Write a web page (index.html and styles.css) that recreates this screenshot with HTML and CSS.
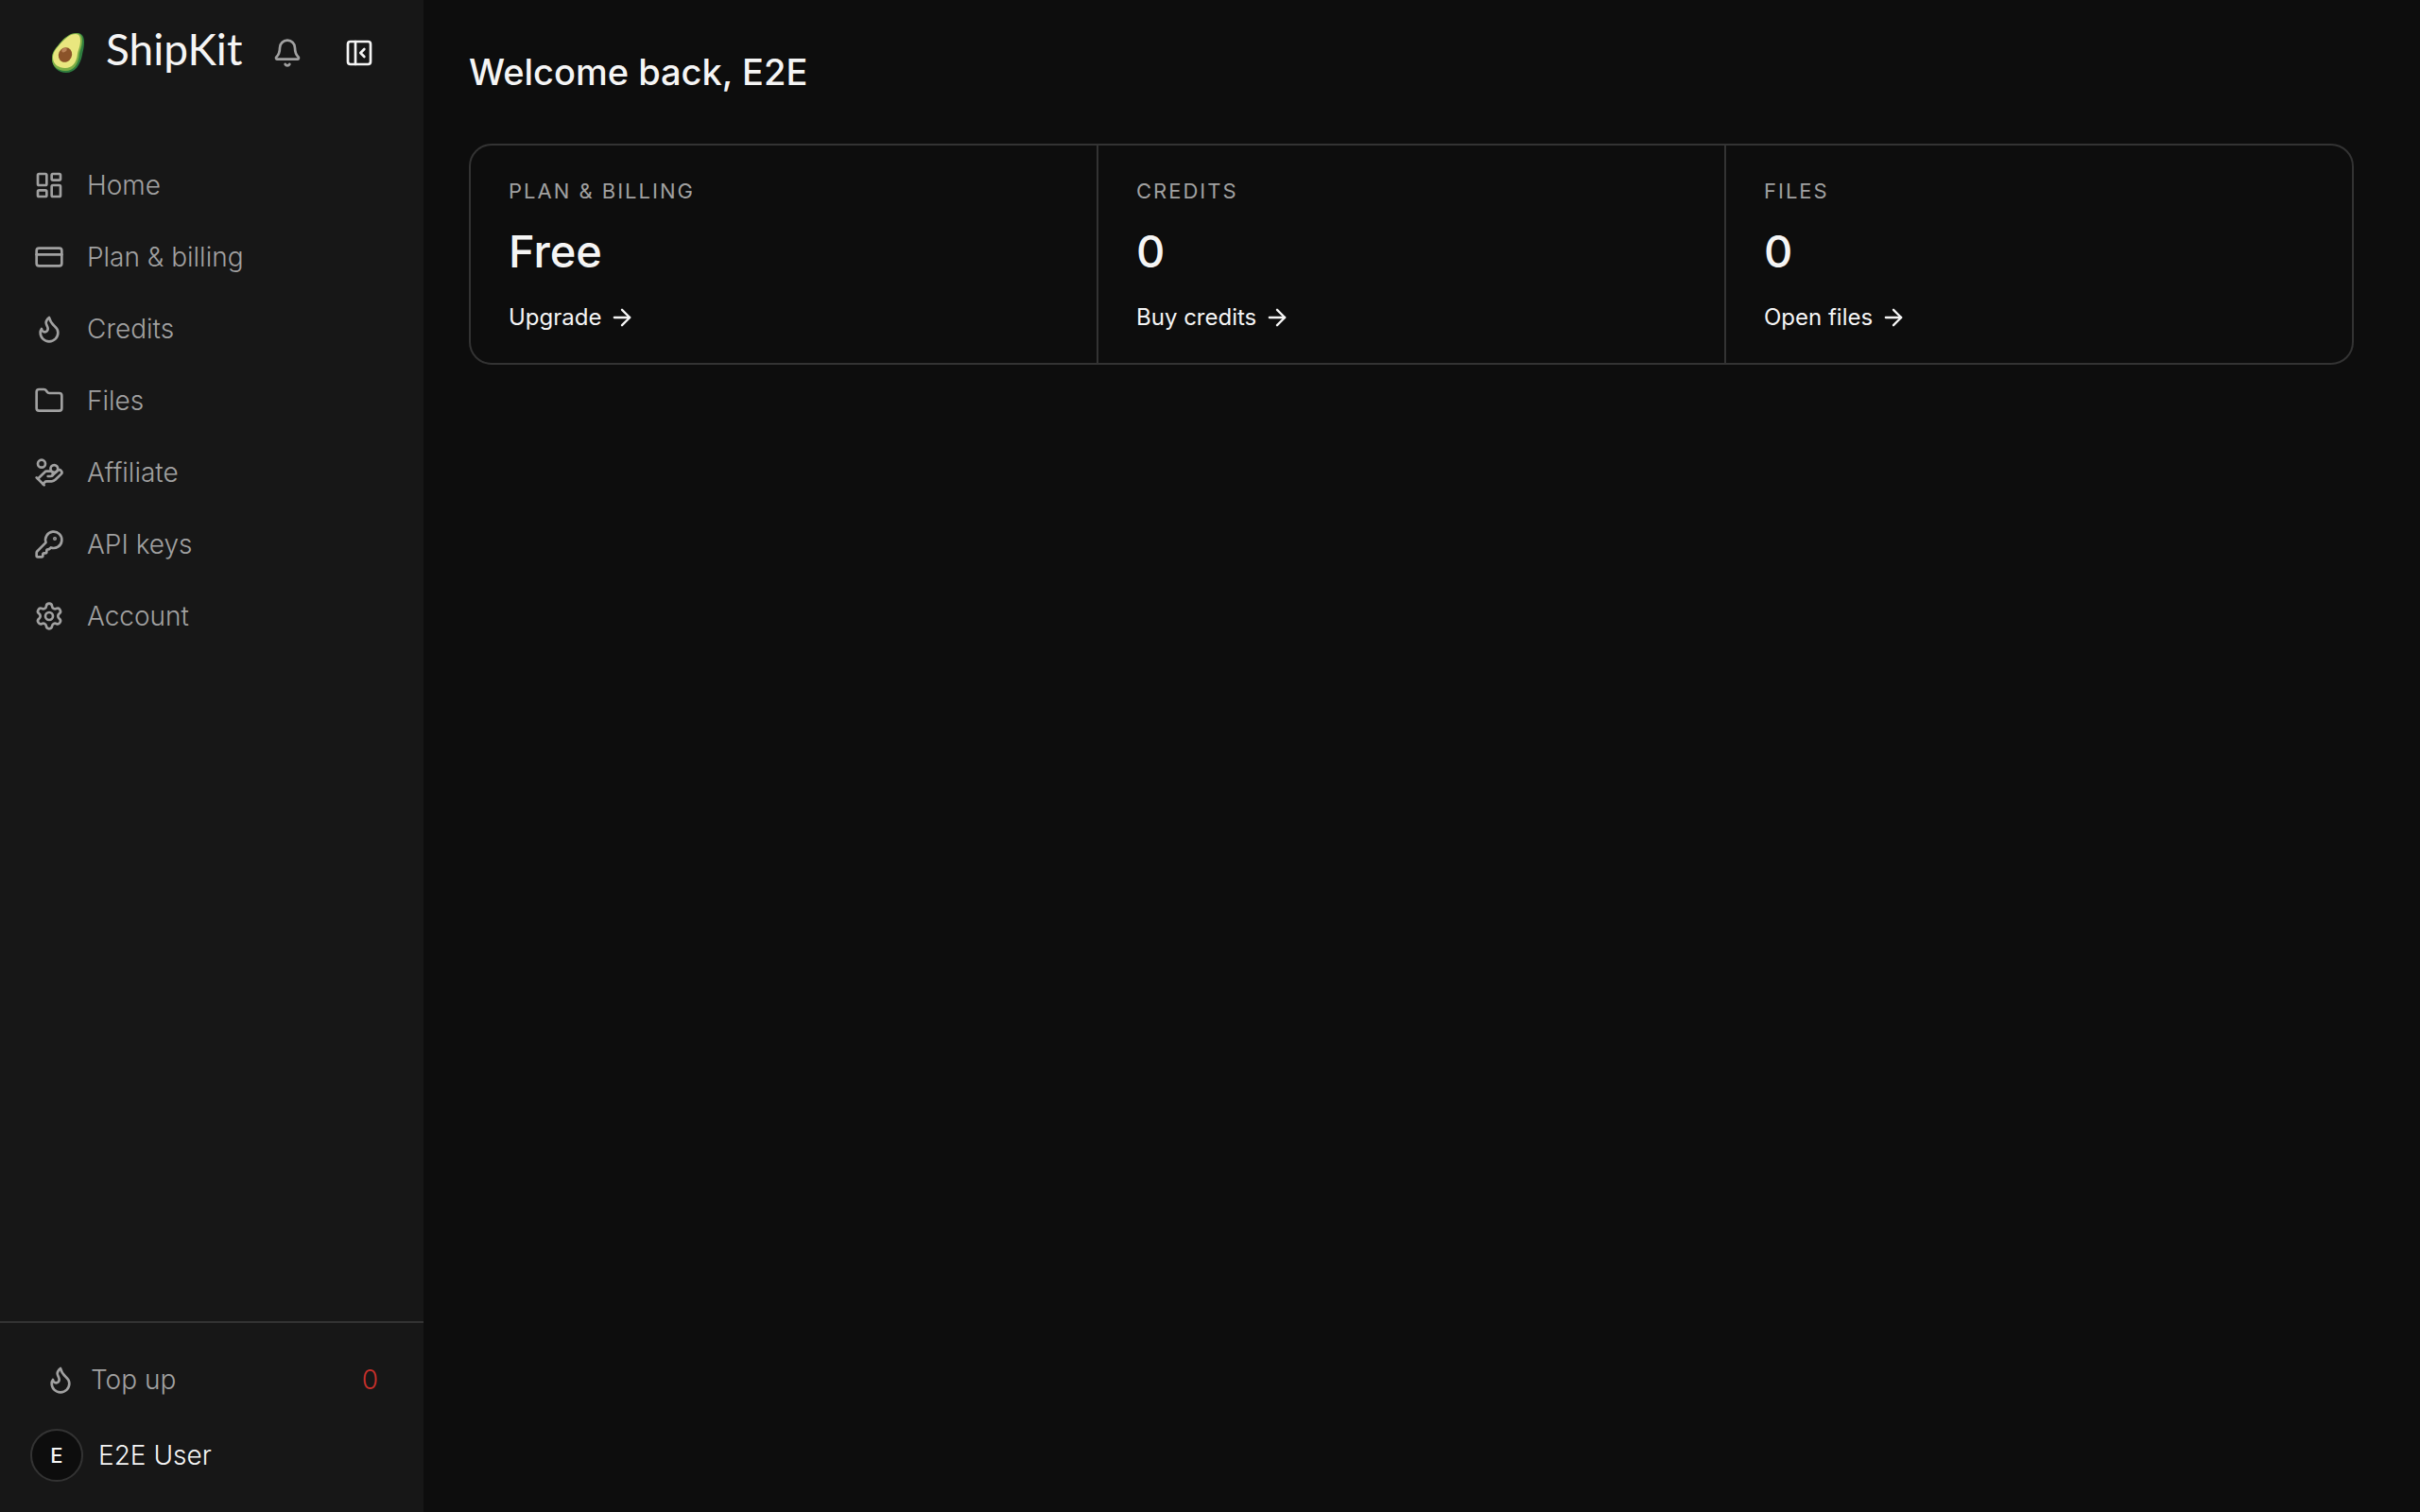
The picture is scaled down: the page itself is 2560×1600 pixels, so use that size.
FILE: index.html
```html
<!DOCTYPE html>
<html lang="en">
  <head>
    <meta charset="UTF-8" />
    <meta name="viewport" content="width=device-width, initial-scale=1.0" />
    <title>ShipKit - Dashboard</title>
    <link rel="stylesheet" href="styles.css" />
  </head>
  <body>
    <aside class="sidebar">
      <div class="sidebar-header">
        <a class="brand" href="#">
          <svg class="brand-logo" viewBox="0 0 36 44" aria-hidden="true">
            <path fill="#2f7d3f" d="M28 1c4 0 7 3 7 9 0 6-1 9-2 14-2 11-8 19-17 19C8 43 1 37 1 28c0-8 5-12 9-17C14 6 21 1 28 1z" />
            <path fill="#7cae45" d="M27 1c4 0 6 3 6 8 0 6-2 9-3 14-1 11-6 18-15 18C7 41 1 36 1 28c0-8 5-12 9-17C14 6 20 1 27 1z" />
            <path fill="#e9e77f" d="M26 2c4 0 5 3 5 7 0 6-2 9-3 14-1 10-6 15-13 15C8 38 2 34 2 27c0-7 5-11 9-16 4-4 9-9 15-9z" />
            <ellipse cx="15" cy="24" rx="7" ry="8" fill="#8b5329" transform="rotate(25 15 24)" />
            <ellipse cx="14" cy="19" rx="3" ry="2" fill="#b98257" transform="rotate(-30 14 19)" />
          </svg>
          <span class="brand-name">ShipKit</span>
        </a>
        <button class="icon-btn muted" type="button" aria-label="Notifications">
          <svg class="icon" viewBox="0 0 24 24">
            <path d="M10.268 21a2 2 0 0 0 3.464 0" />
            <path d="M3.262 15.326A1 1 0 0 0 4 17h16a1 1 0 0 0 .74-1.673C19.41 13.956 18 12.499 18 8A6 6 0 0 0 6 8c0 4.499-1.411 5.956-2.738 7.326" />
          </svg>
        </button>
        <button class="icon-btn" type="button" aria-label="Collapse sidebar">
          <svg class="icon" viewBox="0 0 24 24">
            <rect x="3" y="3" width="18" height="18" rx="2" />
            <path d="M9 3v18" />
            <path d="m16 15-3-3 3-3" />
          </svg>
        </button>
      </div>

      <nav class="nav">
        <a class="nav-link" href="#">
          <svg class="icon" viewBox="0 0 24 24">
            <rect x="3" y="3" width="7" height="9" rx="1" />
            <rect x="14" y="3" width="7" height="5" rx="1" />
            <rect x="14" y="12" width="7" height="9" rx="1" />
            <rect x="3" y="16" width="7" height="5" rx="1" />
          </svg>
          Home
        </a>
        <a class="nav-link" href="#">
          <svg class="icon" viewBox="0 0 24 24">
            <rect x="2" y="5" width="20" height="14" rx="2" />
            <path d="M2 10h20" />
          </svg>
          Plan &amp; billing
        </a>
        <a class="nav-link" href="#">
          <svg class="icon" viewBox="0 0 24 24">
            <path d="M12 3q1 4 4 6.500t3 5.500a1 1 0 0 1-14 0 5 5 0 0 1 1-3 1 1 0 0 0 5 0c0-2-1.500-3-1.500-5q0-2 2.500-4" />
          </svg>
          Credits
        </a>
        <a class="nav-link" href="#">
          <svg class="icon" viewBox="0 0 24 24">
            <path d="M20 20a2 2 0 0 0 2-2V8a2 2 0 0 0-2-2h-7.900a2 2 0 0 1-1.690-.9L9.600 3.900A2 2 0 0 0 7.930 3H4a2 2 0 0 0-2 2v13a2 2 0 0 0 2 2Z" />
          </svg>
          Files
        </a>
        <a class="nav-link" href="#">
          <svg class="icon" viewBox="0 0 24 24">
            <path d="M11 15h2a2 2 0 1 0 0-4h-3c-.6 0-1.100.2-1.400.6L3 17" />
            <path d="m7 21 1.600-1.400c.3-.4.8-.6 1.400-.6h4c1.100 0 2.100-.4 2.800-1.200l4.600-4.400a2 2 0 0 0-2.750-2.910l-4.200 3.900" />
            <path d="m2 16 6 6" />
            <circle cx="16" cy="9" r="2.9" />
            <circle cx="6" cy="5" r="3" />
          </svg>
          Affiliate
        </a>
        <a class="nav-link" href="#">
          <svg class="icon" viewBox="0 0 24 24">
            <path d="M2.586 17.414A2 2 0 0 0 2 18.828V21a1 1 0 0 0 1 1h3a1 1 0 0 0 1-1v-1a1 1 0 0 1 1-1h1a1 1 0 0 0 1-1v-1a1 1 0 0 1 1-1h.172a2 2 0 0 0 1.414-.586l.814-.814a6.500 6.500 0 1 0-4-4z" />
            <circle cx="16.5" cy="7.5" r=".5" fill="currentColor" />
          </svg>
          API keys
        </a>
        <a class="nav-link" href="#">
          <svg class="icon" viewBox="0 0 24 24">
            <path d="M9.671 4.136a2.340 2.340 0 0 1 4.659 0 2.340 2.340 0 0 0 3.319 1.915 2.340 2.340 0 0 1 2.330 4.033 2.340 2.340 0 0 0 0 3.831 2.340 2.340 0 0 1-2.330 4.033 2.340 2.340 0 0 0-3.319 1.915 2.340 2.340 0 0 1-4.659 0 2.340 2.340 0 0 0-3.320-1.915 2.340 2.340 0 0 1-2.330-4.033 2.340 2.340 0 0 0 0-3.831A2.340 2.340 0 0 1 6.350 6.051a2.340 2.340 0 0 0 3.319-1.915" />
            <circle cx="12" cy="12" r="3" />
          </svg>
          Account
        </a>
      </nav>

      <div class="sidebar-footer">
        <a class="top-up" href="#">
          <svg class="icon" viewBox="0 0 24 24">
            <path d="M12 3q1 4 4 6.500t3 5.500a1 1 0 0 1-14 0 5 5 0 0 1 1-3 1 1 0 0 0 5 0c0-2-1.500-3-1.500-5q0-2 2.500-4" />
          </svg>
          <span>Top up</span>
          <span class="top-up-count">0</span>
        </a>
        <button class="user" type="button">
          <span class="avatar">E</span>
          <span>E2E User</span>
        </button>
      </div>
    </aside>

    <main class="main">
      <h1 class="page-title">Welcome back, E2E</h1>

      <div class="stats">
        <section class="stat">
          <h2 class="stat-label">Plan &amp; billing</h2>
          <p class="stat-value">Free</p>
          <a class="stat-link" href="#">
            Upgrade
            <svg class="icon arrow" viewBox="0 0 24 24"><path d="M5 12h14" /><path d="m12 5 7 7-7 7" /></svg>
          </a>
        </section>
        <section class="stat">
          <h2 class="stat-label">Credits</h2>
          <p class="stat-value">0</p>
          <a class="stat-link" href="#">
            Buy credits
            <svg class="icon arrow" viewBox="0 0 24 24"><path d="M5 12h14" /><path d="m12 5 7 7-7 7" /></svg>
          </a>
        </section>
        <section class="stat">
          <h2 class="stat-label">Files</h2>
          <p class="stat-value">0</p>
          <a class="stat-link" href="#">
            Open files
            <svg class="icon arrow" viewBox="0 0 24 24"><path d="M5 12h14" /><path d="m12 5 7 7-7 7" /></svg>
          </a>
        </section>
      </div>
    </main>
  </body>
</html>
```
FILE: styles.css
```css
* {
  box-sizing: border-box;
}

body {
  display: flex;
  min-height: 100vh;
  margin: 0;
  background-color: #0d0d0d;
  color: #f5f5f5;
  font-family: Inter, "Liberation Sans", sans-serif;
  font-size: 28px;
  font-weight: 300;
  line-height: 40px;
}

a {
  color: inherit;
  text-decoration: none;
}

button {
  padding: 0;
  border: none;
  background: none;
  color: inherit;
  font: inherit;
  cursor: pointer;
}

h1,
h2,
p {
  margin: 0;
}

.icon {
  flex-shrink: 0;
  width: 32px;
  height: 32px;
  fill: none;
  stroke: currentColor;
  stroke-width: 2;
  stroke-linecap: round;
  stroke-linejoin: round;
}

.icon.arrow {
  width: 28px;
  height: 28px;
}

/* Sidebar */
.sidebar {
  display: flex;
  flex-direction: column;
  flex-shrink: 0;
  width: 448px;
  background-color: #171717;
}

.sidebar-header {
  display: flex;
  align-items: center;
  height: 112px;
  padding: 0 36px 0 54px;
}

.brand {
  display: flex;
  align-items: center;
  gap: 22px;
  margin-right: auto;
}

.brand-logo {
  width: 36px;
  height: 44px;
}

.brand-name {
  padding-bottom: 8px;
  font-family: Lato, sans-serif;
  font-size: 46px;
  font-weight: 400;
  line-height: 48px;
}

.icon-btn {
  display: flex;
  align-items: center;
  justify-content: center;
  width: 64px;
  height: 64px;
}

.icon-btn + .icon-btn {
  margin-left: 12px;
}

.muted {
  color: #a1a1a1;
}

.nav {
  display: flex;
  flex-direction: column;
  gap: 8px;
  padding: 50px 16px;
}

.nav-link {
  display: flex;
  align-items: center;
  gap: 24px;
  height: 68px;
  padding: 0 20px;
  color: #a1a1a1;
}

.sidebar-footer {
  display: flex;
  flex-direction: column;
  gap: 16px;
  margin-top: auto;
  padding: 24px 32px 32px;
  border-top: 2px solid #333;
}

.top-up {
  display: flex;
  align-items: center;
  gap: 16px;
  height: 72px;
  padding: 0 16px;
  color: #a1a1a1;
}

.top-up-count {
  margin-left: auto;
  color: #c6302b;
}

.user {
  display: flex;
  align-items: center;
  gap: 16px;
  text-align: left;
}

.avatar {
  display: flex;
  align-items: center;
  justify-content: center;
  width: 56px;
  height: 56px;
  border: 2px solid #333;
  border-radius: 50%;
  background-color: #0d0d0d;
  font-size: 22px;
  font-weight: 500;
}

/* Main */
.main {
  flex: 1;
  padding: 48px 70px 48px 48px;
}

.page-title {
  margin-bottom: 48px;
  font-size: 38px;
  font-weight: 500;
  line-height: 56px;
}

/* the 2px gap shows the background as divider lines */
.stats {
  display: grid;
  grid-template-columns: repeat(3, 1fr);
  gap: 2px;
  overflow: hidden;
  border: 2px solid #333;
  border-radius: 24px;
  background-color: #333;
}

.stat {
  display: flex;
  flex-direction: column;
  align-items: flex-start;
  padding: 32px 40px;
  background-color: #0d0d0d;
}

.stat-label {
  color: #a1a1a1;
  font-size: 22px;
  font-weight: 400;
  line-height: 32px;
  letter-spacing: 2px;
  text-transform: uppercase;
}

.stat-value {
  margin: 20px 0 26px;
  font-size: 47px;
  font-weight: 500;
  line-height: 56px;
}

.stat-link {
  display: flex;
  align-items: center;
  gap: 8px;
  font-size: 24px;
  font-weight: 400;
  line-height: 32px;
}
```
